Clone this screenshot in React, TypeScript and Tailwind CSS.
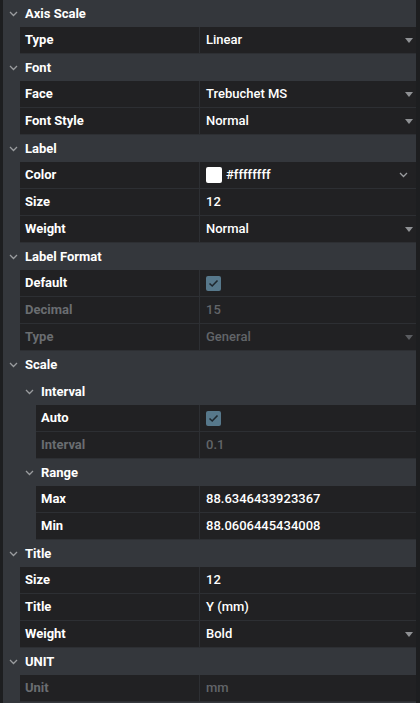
import { ReactNode } from 'react';

type Row =
  | { kind: 'group'; title: string; level: number }
  | { kind: 'field'; label: string; level: number; value: ReactNode; disabled?: boolean };

function Caret({ muted }: { muted?: boolean }) {
  return (
    <svg width="8" height="5" viewBox="0 0 8 5" className="shrink-0">
      <path d="M0 0 H8 L4 5 Z" fill={muted ? '#5a5c60' : '#8f9194'} />
    </svg>
  );
}

function Chevron({ color = '#9a9c9f' }: { color?: string }) {
  return (
    <svg width="9" height="6" viewBox="0 0 9 6" className="shrink-0">
      <path d="M1 1 L4.5 4.5 L8 1" stroke={color} strokeWidth="1.3" fill="none" />
    </svg>
  );
}

function Check() {
  return (
    <div className="w-[15px] h-[15px] rounded-[2px] bg-[#57788b] flex items-center justify-center">
      <svg width="11" height="9" viewBox="0 0 11 9">
        <path d="M1.5 4.5 L4.2 7 L9.5 1.5" stroke="#1e272e" strokeWidth="1.6" fill="none" />
      </svg>
    </div>
  );
}

function Select({ text, muted }: { text: string; muted?: boolean }) {
  return (
    <div className="flex items-center justify-between w-full pr-[3px]">
      <span className={muted ? 'text-[#626569]' : 'text-white'}>{text}</span>
      <Caret muted={muted} />
    </div>
  );
}

const rows: Row[] = [
  { kind: 'group', title: 'Axis Scale', level: 0 },
  { kind: 'field', label: 'Type', level: 0, value: <Select text="Linear" /> },
  { kind: 'group', title: 'Font', level: 0 },
  { kind: 'field', label: 'Face', level: 0, value: <Select text="Trebuchet MS" /> },
  { kind: 'field', label: 'Font Style', level: 0, value: <Select text="Normal" /> },
  { kind: 'group', title: 'Label', level: 0 },
  {
    kind: 'field',
    label: 'Color',
    level: 0,
    value: (
      <div className="flex items-center justify-between w-full pr-[8px]">
        <div className="flex items-center gap-[4px]">
          <div className="w-[16px] h-[16px] bg-white rounded-[2px]" />
          <span>#ffffffff</span>
        </div>
        <Chevron />
      </div>
    ),
  },
  { kind: 'field', label: 'Size', level: 0, value: <span>12</span> },
  { kind: 'field', label: 'Weight', level: 0, value: <Select text="Normal" /> },
  { kind: 'group', title: 'Label Format', level: 0 },
  { kind: 'field', label: 'Default', level: 0, value: <Check /> },
  { kind: 'field', label: 'Decimal', level: 0, value: <span>15</span>, disabled: true },
  { kind: 'field', label: 'Type', level: 0, value: <Select text="General" muted />, disabled: true },
  { kind: 'group', title: 'Scale', level: 0 },
  { kind: 'group', title: 'Interval', level: 1 },
  { kind: 'field', label: 'Auto', level: 1, value: <Check /> },
  { kind: 'field', label: 'Interval', level: 1, value: <span>0.1</span>, disabled: true },
  { kind: 'group', title: 'Range', level: 1 },
  { kind: 'field', label: 'Max', level: 1, value: <span>88.6346433923367</span> },
  { kind: 'field', label: 'Min', level: 1, value: <span>88.0606445434008</span> },
  { kind: 'group', title: 'Title', level: 0 },
  { kind: 'field', label: 'Size', level: 0, value: <span>12</span> },
  { kind: 'field', label: 'Title', level: 0, value: <span>Y (mm)</span> },
  { kind: 'field', label: 'Weight', level: 0, value: <Select text="Bold" /> },
  { kind: 'group', title: 'UNIT', level: 0 },
  { kind: 'field', label: 'Unit', level: 0, value: <span>mm</span>, disabled: true },
];

export default function App() {
  return (
    <div
      className="w-[420px] h-[703px] bg-[#34373c] border-l-[3px] border-r-[4px] border-[#1d1e20] flex flex-col overflow-hidden text-[13px]"
      style={{ fontFamily: 'Roboto, "Liberation Sans", sans-serif' }}
    >
      {rows.map((row, i) =>
        row.kind === 'group' ? (
          <div
            key={i}
            className={`h-[27px] shrink-0 flex items-center font-bold text-white ${
              row.level === 0 ? 'pl-[6px]' : 'pl-[22px]'
            }`}
          >
            <Chevron />
            <span className="ml-[7px]">{row.title}</span>
          </div>
        ) : (
          <div
            key={i}
            className={`h-[27px] shrink-0 flex bg-[#212123] border-b border-[#2d2f33] ${
              row.level === 0 ? 'ml-[17px]' : 'ml-[33px]'
            }`}
          >
            <div
              className={`flex items-center pl-[5px] border-r border-[#2d2f33] font-bold ${
                row.level === 0 ? 'w-[180px]' : 'w-[164px]'
              } ${row.disabled ? 'text-[#6a6d71]' : 'text-white'}`}
            >
              {row.label}
            </div>
            <div
              className={`flex-1 flex items-center pl-[6px] font-medium ${
                row.disabled ? 'text-[#626569]' : 'text-white'
              }`}
            >
              {row.value}
            </div>
          </div>
        )
      )}
    </div>
  );
}
